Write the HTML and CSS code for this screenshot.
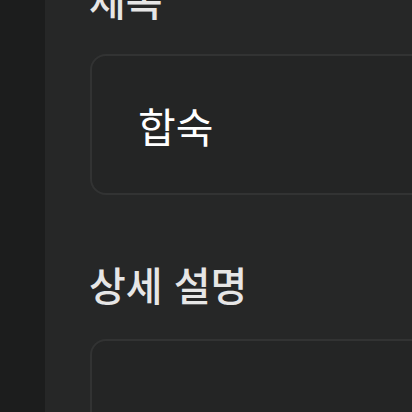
FILE: index.html
```html
<!DOCTYPE html>
<html lang="ko">
<head>
<meta charset="utf-8">
<link rel="stylesheet" href="styles.css">
</head>
<body>
<div class="app">
  <aside class="sidebar"></aside>
  <main class="main">
    <form class="form">
      <div class="field">
        <label class="label">제목</label>
        <div class="input input-single">합숙</div>
      </div>
      <div class="field">
        <label class="label">상세 설명</label>
        <div class="input input-multi"></div>
      </div>
    </form>
  </main>
</div>
</body>
</html>
```
FILE: styles.css
```css
html, body {
  margin: 0;
  padding: 0;
  background: #262727;
}
body {
  font-family: "Noto Sans CJK KR", "Noto Sans", sans-serif;
}
.app {
  display: flex;
  width: 412px;
  height: 412px;
  overflow: hidden;
}
.sidebar {
  width: 45px;
  flex: none;
  background: #1c1d1d;
}
.main {
  flex: 1;
  background: #262727;
  padding-left: 45px;
  overflow: hidden;
}
.form {
  margin-top: -24px;
  width: 420px;
  display: flex;
  flex-direction: column;
  gap: 66px;
}
.field {
  display: flex;
  flex-direction: column;
  gap: 32px;
}
.label {
  font-size: 40px;
  line-height: 46px;
  font-weight: 500;
  color: #e6e6e6;
  margin-left: -1px;
}
.input {
  box-sizing: border-box;
  border: 2px solid #323333;
  border-radius: 16px;
  background: #242525;
  color: #ffffff;
  font-size: 41px;
  font-weight: 400;
}
.input-single {
  height: 141px;
  display: flex;
  align-items: center;
  padding-left: 46px;
}
.input-multi {
  height: 200px;
}
```
